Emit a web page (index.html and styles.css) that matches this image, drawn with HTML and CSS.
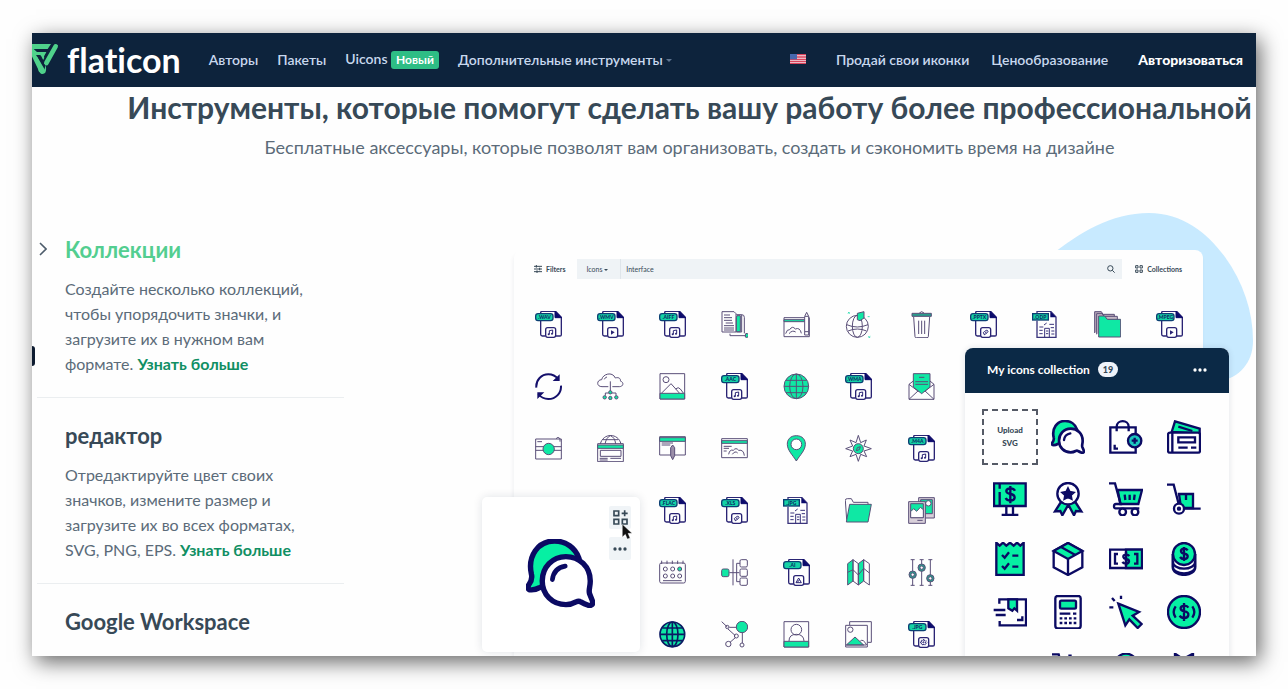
FILE: index.html
```html
<!DOCTYPE html>
<html lang="ru">
<head>
    <meta charset="UTF-8">
    <meta name="viewport" content="width=device-width, initial-scale=1.0">
    <title>Flaticon: инструменты</title>
    <link rel="stylesheet" href="styles.css">
</head>
<body>
    <!-- shared icon shapes -->
    <svg class="sprite" aria-hidden="true">
        <symbol id="file" viewBox="0 0 81 81">
            <path d="M17 7V5q0-4 4-4h41l17 18v52q0 4-4 4H62M31 75h-9q-5 0-5-5V29" fill="none" stroke="#2a2474" stroke-width="4"/>
            <path d="M60 1v19h19z" fill="#0b0a6b" stroke="#0b0a6b" stroke-width="3"/>
            <rect x="2" y="8" width="52" height="21" rx="7" fill="#14d3a6" stroke="#0b3f73" stroke-width="4"/>
            <rect x="32" y="50" width="30" height="29" rx="6" fill="#fff" stroke="#2a2474" stroke-width="4"/>
        </symbol>
        <symbol id="note" viewBox="0 0 81 81">
            <path d="M43 70V59l10-2v11" fill="none" stroke="#2a2474" stroke-width="3"/>
            <circle cx="41" cy="70" r="3" fill="#2a2474"/><circle cx="51" cy="68" r="3" fill="#2a2474"/>
        </symbol>
        <symbol id="play" viewBox="0 0 81 81">
            <path d="M42 58l11 6-11 7z" fill="#2a2474"/>
        </symbol>
        <symbol id="clip" viewBox="0 0 81 81">
            <path d="M41 68q-3-4 2-6l6-4q4-1 5 3 0 3-4 5l-5 5q-3 1-4-3zM44 67l6-4" fill="none" stroke="#2a2474" stroke-width="3"/>
        </symbol>
        <symbol id="doc" viewBox="0 0 81 81">
            <path d="M15 29v50h57V18L56 1H15v6" fill="none" stroke="#3a347c" stroke-width="4"/>
            <path d="M55 1v18h17z" fill="#0b0a6b"/>
            <rect x="2" y="8" width="47" height="19" fill="#14d3a6" stroke="#0b3f73" stroke-width="4"/>
            <path d="M22 48h12M22 58h10M22 68h10M36 42l8-6M52 40h14M38 79V52h14v27M42 60h7M42 68h7M56 50h10M58 60h9M58 69h9" fill="none" stroke="#3a347c" stroke-width="3"/>
        </symbol>
        <symbol id="chat" viewBox="0 0 102 102">
            <path d="M5 75q-4-2-1-7 6-8 4-16C2 25 18 3 42 3c17 0 31 10 36 25L34 70q-8-2-14 2-7 4-15 3z" fill="#06f0a3" stroke="#0b0a63" stroke-width="8"/>
            <path d="M59 26c20 0 36 15 36 36 0 10-3 13-1 19l4 10c2 6-1 8-6 7q-6-2-11-5-3-2-7 0-7 4-15 4c-20 0-35-15-35-35s15-36 35-36z" fill="#fff" stroke="#0b0a63" stroke-width="8"/>
            <path d="M39 60q2-17 19-20" fill="none" stroke="#0b0a63" stroke-width="7" stroke-linecap="round"/>
        </symbol>
    </svg>

    <div class="window">
        <header class="header">
            <a class="logo" href="#">
                <svg class="logo-mark" viewBox="0 0 96 96" aria-hidden="true">
                    <path d="M6 3h66L62 18H32l5 9h20l-6 12 6 34q2 20-10 20-7 0-10-7L2 14Q-2 5 6 3z" fill="#4fd28b"/>
                    <path d="M20 18h43l-6 9H30zM27 36h14l12 24 7-12-8 34z" fill="#0d233c"/>
                    <path d="M28 37l26 44-9 12-10-8z" fill="#4fd28b"/>
                    <path d="M36 27h22l-7 12h-9z" fill="#4fd28b"/>
                    <path d="M84 11L54 63" stroke="#0d233c" stroke-width="22"/>
                    <path d="M86 10L58 60" stroke="#4fd28b" stroke-width="14" stroke-linecap="round"/>
                </svg>
                <span>flaticon</span>
            </a>
            <nav class="menu">
                <a href="#">Авторы</a>
                <a href="#">Пакеты</a>
                <a href="#">Uicons <span class="badge">Новый</span></a>
                <a href="#">Дополнительные инструменты <span class="caret"></span></a>
            </nav>
            <nav class="menu menu-right">
                <button class="lang" aria-label="English">
                    <svg viewBox="0 0 48 30" width="16" height="10">
                        <rect width="48" height="30" fill="#f3dfe6"/>
                        <path d="M0 2h48M0 9h48M0 16h48M0 22h48M0 28h48" stroke="#d8445c" stroke-width="4"/>
                        <rect width="21" height="16" fill="#4968ae"/>
                    </svg>
                </button>
                <a href="#">Продай свои иконки</a>
                <a href="#">Ценообразование</a>
                <a class="login" href="#">Авторизоваться</a>
            </nav>
        </header>

        <section class="hero">
            <h1>Инструменты, которые помогут сделать вашу работу более профессиональной</h1>
            <p>Бесплатные аксессуары, которые позволят вам организовать, создать и сэкономить время на дизайне</p>
        </section>

        <main class="tools">
            <div class="tool-list">
                <span class="side-tab"></span>
                <article class="tool active">
                    <svg class="chevron" viewBox="0 0 8 14" width="8" height="14"><path d="M1 1l6 6-6 6" fill="none" stroke="#4d5c6b" stroke-width="1.6"/></svg>
                    <h2>Коллекции</h2>
                    <p>Создайте несколько коллекций, чтобы упорядочить значки, и загрузите их в нужном вам формате. <a href="#">Узнать больше</a></p>
                </article>
                <article class="tool">
                    <h2>редактор</h2>
                    <p>Отредактируйте цвет своих значков, измените размер и загрузите их во всех форматах, SVG, PNG, EPS. <a href="#">Узнать больше</a></p>
                </article>
                <article class="tool">
                    <h2>Google Workspace</h2>
                </article>
            </div>

            <div class="showcase">
                <svg class="blob" viewBox="0 0 202 176" aria-hidden="true">
                    <path d="M0 42C28 20 60 0 98 0c34 0 58 20 76 44 18 25 28 54 28 84 0 22-14 36-32 40L60 176z" fill="#c8eaff"/>
                </svg>

                <div class="panel">
                    <div class="toolbar">
                        <button class="tool-btn">
                            <svg viewBox="0 0 24 24" width="8" height="8"><path d="M0 4h24M0 12h24M0 20h24M7 0v8M17 8v8M9 16v8" fill="none" stroke="#374957" stroke-width="3"/></svg>
                            Filters
                        </button>
                        <div class="search">
                            <button class="search-type">Icons <span class="caret"></span></button>
                            <input type="text" value="Interface" aria-label="Search">
                            <svg viewBox="0 0 24 24" width="8" height="8"><circle cx="10" cy="10" r="8" fill="none" stroke="#374957" stroke-width="3"/><path d="M16 16l7 7" stroke="#374957" stroke-width="3"/></svg>
                        </div>
                        <button class="tool-btn">
                            <svg viewBox="0 0 24 24" width="8" height="8"><path d="M2 2h7v7H2zM15 2h7v7h-7zM2 15h7v7H2zM15 15h7v7h-7z" fill="none" stroke="#374957" stroke-width="3"/></svg>
                            Collections
                        </button>
                    </div>

                    <div class="icon-grid">
                        <!-- row 1 -->
                        <svg viewBox="0 0 81 81"><use href="#file"/><use href="#note"/><text x="28" y="24">.WAV</text></svg>
                        <svg viewBox="0 0 81 81"><use href="#file"/><use href="#play"/><text x="28" y="24">.WMV</text></svg>
                        <svg viewBox="0 0 81 81"><use href="#file"/><use href="#note"/><text x="28" y="24">.AIFF</text></svg>
                        <svg viewBox="0 0 81 81" class="line">
                            <path d="M46 11h16v52H46"/><path d="M48 14h10v48H46V20z" class="fill"/>
                            <path d="M3 2h36l6 6v55H3zM9 12h18M9 20h24M9 28h24M14 36h22M9 44h30M9 51h30M9 57h30M27 68v6h46"/><path d="M74 68a6 6 0 1 1-1 10z" class="fill"/><path d="M62 11q8 0 8 8v48"/>
                        </svg>
                        <svg viewBox="0 0 81 81" class="line">
                            <path d="M3 20h76v57H3zM8 68q4-14 12-12 8-13 17-2 14-6 18 13M18 68q10-12 20-5"/><path d="M3 26h62v6H3z" class="fill"/>
                            <path d="M65 72V16l6-12 6 12v56z" fill="#fff"/><path d="M66 16h11M66 62h11"/>
                        </svg>
                        <svg viewBox="0 0 81 81" class="line">
                            <circle cx="37" cy="46" r="33"/><ellipse cx="37" cy="46" rx="15" ry="33"/><path d="M5 41q32 14 64 0M9 60q28-12 56 0"/>
                            <path d="M37 26V7L57 2v19l-12 8z" class="fill"/><path d="M9 3l5 5M14 3l-5 5M70 76l6 5M76 76l-6 5M68 17h6" class="spark"/>
                        </svg>
                        <svg viewBox="0 0 81 81" class="line">
                            <path d="M17 18l4 59q0 3 4 3h32q4 0 4-3l4-59M32 29v40M41 29v40M50 29v40M34 6q7-8 14 0"/><path d="M12 7h58v9H12z" class="fill dark"/>
                        </svg>
                        <svg viewBox="0 0 81 81"><use href="#file"/><use href="#clip"/><text x="28" y="24">.PPTX</text></svg>
                        <svg viewBox="0 0 81 81"><use href="#doc"/><text x="25" y="23">.ODP</text></svg>
                        <svg viewBox="0 0 81 81" class="line">
                            <path d="M2 66V2h20l5 8h34v14" fill="#b9a9b9"/><path d="M8 70V8h16l6 8h40v14" fill="#c4b8c4"/>
                            <path d="M14 78V15h18l8 10h40v53z" class="fill"/>
                        </svg>
                        <svg viewBox="0 0 81 81"><use href="#file"/><use href="#play"/><text x="28" y="24">.MPEG</text></svg>

                        <!-- row 2 -->
                        <svg viewBox="0 0 81 81" class="row-start">
                            <path d="M4 44C2 20 20 4 40 4c12 0 22 5 30 15M78 38c1 22-15 40-38 40-12 0-22-5-30-15" fill="none" stroke="#140f6b" stroke-width="6"/>
                            <path d="M74 4v20H53zM7 78V58h21z" fill="#140f6b"/>
                        </svg>
                        <svg viewBox="0 0 81 81" class="line">
                            <path d="M15 41C-3 41-1 20 14 20 17 3 46-6 55 15c12-4 17 4 15 9 12 4 9 17-3 17H46M34 41H15M22 19q3-7 8-7M40 25v32M40 60H25v8M40 60h17v8"/>
                            <g class="fill"><circle cx="40" cy="58" r="5"/><circle cx="23" cy="73" r="5"/><circle cx="40" cy="75" r="5"/><circle cx="58" cy="73" r="5"/></g>
                        </svg>
                        <svg viewBox="0 0 81 81" class="line">
                            <path d="M3 2h74v76H3z"/><circle cx="21" cy="20" r="9"/><path d="M8 60l28-28 25 28M50 48q8-8 14 0l9 12"/><path d="M3 61h74v17H3z" class="fill"/>
                        </svg>
                        <svg viewBox="0 0 81 81"><use href="#file"/><use href="#note"/><text x="28" y="24">.AAC</text></svg>
                        <svg viewBox="0 0 81 81" class="line">
                            <circle cx="40" cy="40" r="37" class="fill"/><ellipse cx="40" cy="40" rx="20" ry="37"/><path d="M40 3v74M3 40h74M9 22h62M9 59h62"/>
                        </svg>
                        <svg viewBox="0 0 81 81"><use href="#file"/><use href="#note"/><text x="28" y="24">.WMA</text></svg>
                        <svg viewBox="0 0 81 81" class="line">
                            <path d="M3 34l13-10h50l12 10v45H3zM3 34l29 22M78 34L49 56M3 79l29-27M78 79L49 52"/><path d="M16 2h50v40L41 62 16 42z" class="fill"/><path d="M33 13h16M22 26h38M22 34h38"/>
                        </svg>

                        <!-- row 3 -->
                        <svg viewBox="0 0 81 81" class="line row-start">
                            <path d="M2 12h77v60H2zM2 35h77M2 46h77M7 20h14M63 11q6-8 12 0v9"/><circle cx="41" cy="42" r="17" class="fill"/>
                        </svg>
                        <svg viewBox="0 0 81 81" class="line">
                            <path d="M10 27C18-7 64-7 72 27M24 27q4-20 16-25 14 5 16 25M18 14h46M2 26h77v54H2zM10 46h62v18H10zM8 70h24M8 75h24M40 70h32"/><path d="M2 30h77v10H2z" class="fill"/>
                        </svg>
                        <svg viewBox="0 0 81 81" class="line">
                            <path d="M2 5h77v55H2zM8 24h34M8 30h26"/><path d="M2 8h77v11H2z" class="fill"/><path d="M35 62V38l6-8 6 8v24l-6 12z" fill="#9a8ea8"/>
                        </svg>
                        <svg viewBox="0 0 81 81" class="line">
                            <path d="M2 11h77v57H2zM8 34h24M8 40h16M8 48h9M23 58q3-16 14-12 8-10 16 0 15-3 17 16M34 58q8-12 16-4"/><path d="M2 17h77v8H2z" class="fill"/>
                        </svg>
                        <svg viewBox="0 0 81 81" class="line">
                            <path d="M40 2c19 0 28 13 27 27-1 18-16 31-27 49C29 60 14 47 13 29 12 15 21 2 40 2z" class="fill"/><circle cx="40" cy="28" r="16" fill="#fff"/>
                        </svg>
                        <svg viewBox="0 0 81 81" class="line">
                            <path d="M40 1l7 22 17-8-7 18 22 8-22 7 8 17-18-7-7 21-7-21-18 7 8-17L2 41l21-8-8-18 18 8z"/><circle cx="40" cy="41" r="15" class="fill"/><path d="M34 47l3-9 9-3-3 9z"/>
                        </svg>
                        <svg viewBox="0 0 81 81"><use href="#file"/><use href="#note"/><text x="28" y="24">.M4A</text></svg>

                        <!-- row 4 -->
                        <svg viewBox="0 0 81 81" class="row-start-third"><use href="#file"/><use href="#note"/><text x="28" y="24">.FLAC</text></svg>
                        <svg viewBox="0 0 81 81"><use href="#file"/><use href="#clip"/><text x="28" y="24">.XLS</text></svg>
                        <svg viewBox="0 0 81 81"><use href="#doc"/><text x="25" y="23">.JPG</text></svg>
                        <svg viewBox="0 0 81 81" class="line">
                            <path d="M5 68L1 10q0-5 6-5h12l6 11h44v8"/><path d="M14 22h65L69 75H4z" class="fill"/>
                        </svg>
                        <svg viewBox="0 0 81 81" class="line">
                            <path d="M32 2h47v61H32z" fill="#d9d0da"/><path d="M38 8h35v42H38z" class="fill"/><circle cx="61" cy="19" r="8" fill="#fff"/>
                            <path d="M2 14h50v65H2z" fill="#d9d0da"/><path d="M8 20h38v42H8z" class="fill"/><path d="M8 44l9-9 9 8 11-12 9 7v24H8z" fill="#fff"/><path d="M28 70h16"/>
                        </svg>

                        <!-- row 5 -->
                        <svg viewBox="0 0 81 81" class="line row-start-third">
                            <rect x="2" y="12" width="77" height="60" rx="5"/><path d="M8 5v10M24 5v10M40 5v10M56 5v10M72 5v10M12 65h56"/>
                            <circle cx="19" cy="30" r="6"/><circle cx="41" cy="30" r="6"/><circle cx="62" cy="30" r="6" class="fill"/><circle cx="19" cy="51" r="6"/><circle cx="41" cy="51" r="6"/><circle cx="62" cy="51" r="6"/>
                        </svg>
                        <svg viewBox="0 0 81 81" class="line">
                            <path d="M36 1v78M25 41h30M57 13H47v55h10"/><rect x="57" y="2" width="22" height="22" rx="4"/><rect x="57" y="30" width="22" height="22" rx="4"/><rect x="57" y="57" width="22" height="22" rx="4"/>
                            <rect x="2" y="30" width="22" height="23" rx="5" class="fill"/>
                        </svg>
                        <svg viewBox="0 0 81 81"><use href="#file"/><path d="M39 71l8-14 8 14zM43 70l6-7" fill="none" stroke="#2a2474" stroke-width="3"/><text x="28" y="24">.AI</text></svg>
                        <svg viewBox="0 0 81 81" class="line">
                            <path d="M8 14L24 2v64L8 78zM40 14L56 2v64L40 78z" class="fill"/><path d="M24 2l16 12v64L24 66zM56 2l17 12v64L56 66zM8 40l16-8 16 16 16-20 17 14"/>
                        </svg>
                        <svg viewBox="0 0 81 81" class="line">
                            <path d="M14 2v77M8 2h12M8 79h12M41 2v77M35 2h12M35 79h12M67 2v77M61 2h12M61 79h12"/>
                            <g class="fill dark"><circle cx="14" cy="47" r="11"/><circle cx="41" cy="26" r="11"/><circle cx="67" cy="58" r="11"/></g>
                            <g fill="#fff"><circle cx="14" cy="47" r="5"/><circle cx="41" cy="26" r="5"/><circle cx="67" cy="58" r="5"/></g>
                        </svg>

                        <!-- row 6 -->
                        <svg viewBox="0 0 81 81" class="bold-line row-start-third">
                            <circle cx="40" cy="40" r="37" class="fill"/><ellipse cx="40" cy="40" rx="17" ry="37"/><path d="M40 3v74M3 40h74M10 21h60M10 59h60"/>
                        </svg>
                        <svg viewBox="0 0 81 81" class="line">
                            <path d="M2 2l17 16M25 19h22M21 24l22 20M43 50L27 64M64 36v30"/><circle cx="19" cy="18" r="5"/><circle cx="46" cy="45" r="6"/><circle cx="22" cy="69" r="8"/><circle cx="63" cy="72" r="6"/>
                            <circle cx="63" cy="18" r="17" class="fill"/>
                        </svg>
                        <svg viewBox="0 0 81 81" class="line">
                            <path d="M3 2h74v76H3zM18 60q0-20 22-20t23 20"/><circle cx="40" cy="26" r="16"/><path d="M3 61h74v17H3z" class="fill"/>
                        </svg>
                        <svg viewBox="0 0 81 81" class="line">
                            <path d="M14 12V2h65v62H68M2 13h65v65H2z"/><circle cx="16" cy="26" r="8"/><path d="M4 72l26-24 26 24z" class="fill"/><path d="M46 60q8-8 19 12M4 72h60"/>
                        </svg>
                        <svg viewBox="0 0 81 81"><use href="#file"/><path d="M40 58h14v13H40zM47 54v21M36 64h22" fill="none" stroke="#2a2474" stroke-width="3" stroke-dasharray="4 3"/><text x="28" y="24">.JPG</text></svg>
                    </div>
                </div>

                <div class="preview">
                    <svg class="preview-icon" viewBox="0 0 102 102"><use href="#chat"/></svg>
                    <div class="preview-actions">
                        <button aria-label="Add to collection">
                            <svg viewBox="0 0 45 45" width="15" height="15"><path d="M3 3h14v14H3zM3 28h14v14H3zM28 28h14v14H28zM26 10h18M35 1v18" fill="none" stroke="#374957" stroke-width="5"/></svg>
                        </button>
                        <button aria-label="More">
                            <svg viewBox="0 0 42 12" width="14" height="4" fill="#374957"><circle cx="6" cy="6" r="5"/><circle cx="21" cy="6" r="5"/><circle cx="36" cy="6" r="5"/></svg>
                        </button>
                    </div>
                    <svg class="cursor" viewBox="0 0 30 48" width="10" height="16"><path d="M1 1v38l9-8 6 14 8-3-6-14h12z" fill="#111" stroke="#fff"/></svg>
                </div>

                <div class="collection">
                    <div class="collection-head">
                        <h3>My icons collection</h3>
                        <span class="count">19</span>
                        <button class="more" aria-label="More">
                            <svg viewBox="0 0 42 12" width="14" height="4"><circle cx="6" cy="6" r="5"/><circle cx="21" cy="6" r="5"/><circle cx="36" cy="6" r="5"/></svg>
                        </button>
                    </div>
                    <div class="collection-grid">
                        <button class="upload">Upload SVG</button>
                        <svg viewBox="0 0 102 102"><use href="#chat"/></svg>
                        <svg viewBox="0 0 102 102">
                            <path d="M4 22h76v76H4z" fill="#fff"/><path d="M23 34V20C23-2 59-2 59 20v14M17 74v12h10"/><circle cx="77" cy="62" r="20" class="fill teal"/><path d="M77 53v18M68 62h18"/>
                        </svg>
                        <svg viewBox="0 0 102 102">
                            <path d="M14 36L24 4l74 22v14z" class="fill"/><path d="M34 20l42 13"/><rect x="3" y="38" width="96" height="60" rx="6" fill="#fff"/><path d="M16 38v60M34 52h50v15H34zM34 83h28M72 83h16"/>
                        </svg>

                        <svg viewBox="0 0 102 102">
                            <path d="M3 4h95v68H3z" class="fill"/><path d="M20 6v14M20 30v40M40 72v28M60 72v28M26 99h50"/><path d="M66 26q-4-8-16-7-11 2-10 9 1 6 12 8 13 2 13 11-1 9-13 9-10 0-14-8M52 12v52"/>
                        </svg>
                        <svg viewBox="0 0 102 102">
                            <path d="M30 60L12 88l16-1 6 13 18-32 17 32 6-13 16 1-18-28z" class="fill"/><circle cx="51" cy="35" r="32" fill="#fff"/><path d="M51 20l5 10 11 2-8 7 2 11-10-5-10 5 2-11-8-7 11-2z" fill="#0b0a63"/>
                        </svg>
                        <svg viewBox="0 0 102 102">
                            <path d="M26 24h73L88 66H34z" class="fill"/><path d="M0 4h18l17 62h-14q-6 0-6 7t6 6h70M47 38l2 16M62 38v16M77 38l-2 16"/><circle cx="41" cy="90" r="10" fill="#fff"/><circle cx="78" cy="90" r="10" fill="#fff"/>
                        </svg>
                        <svg viewBox="0 0 102 102">
                            <path d="M36 36h42v42H42z" class="fill"/><path d="M0 8h20l16 62M48 80h53M57 36v18"/><circle cx="36" cy="80" r="15" fill="#fff"/><circle cx="36" cy="80" r="3"/>
                        </svg>

                        <svg viewBox="0 0 102 102">
                            <path d="M10 2l10 9 10-9 10 9 11-9 11 9 10-9 10 9 10-9v97H10z" class="fill"/><path d="M27 39l8 8 13-16M58 41h18M27 72l8 8 13-16M58 74h18"/>
                        </svg>
                        <svg viewBox="0 0 102 102">
                            <path d="M51 3l43 24v49L51 99 8 76V27z" fill="#fff"/><path d="M51 3l43 24-43 24L8 27z" class="fill"/><path d="M51 51v48M30 15l43 24"/>
                        </svg>
                        <svg viewBox="0 0 102 102">
                            <path d="M3 23h96v55H3z" fill="#fff"/><path d="M51 23h48v55H51z" class="fill"/><path d="M27 36h-9v29h9M75 36h10v29H75M61 42q-4-5-11-4-8 1-7 7 1 5 8 6 9 1 9 7-1 7-9 7-7 0-11-5M51 30v42"/>
                        </svg>
                        <svg viewBox="0 0 102 102">
                            <path d="M17 36v38c0 33 68 33 68 0V36M17 56c0 32 68 32 68 0M17 72c0 30 68 30 68 0" fill="#fff"/><circle cx="51" cy="36" r="33" class="fill"/><path d="M62 25q-4-6-12-5-9 2-8 8 1 6 10 7 11 2 10 9-1 7-10 7-9 0-13-6M51 15v42"/>
                        </svg>

                        <svg viewBox="0 0 102 102">
                            <path d="M19 26V13h80v78H20V78M2 45h35M8 60h30M88 64v11H72"/><path d="M46 13h26v34l-8-7-6 7-12-7z" class="fill"/>
                        </svg>
                        <svg viewBox="0 0 102 102">
                            <rect x="13" y="3" width="76" height="97" rx="7" fill="#fff"/><rect x="27" y="17" width="48" height="24" rx="4" class="fill"/><path d="M26 56h32M66 56h10M26 70h8M40 70h8M54 70h8M68 70h8M26 84h8M40 84h8M54 84h8M68 84h8"/>
                        </svg>
                        <svg viewBox="0 0 102 102">
                            <path d="M28 26l62 25-19 11 27 25-12 12-25-26-12 18z" class="fill"/><path d="M9 9l8 9M36 2v10M1 37h12"/>
                        </svg>
                        <svg viewBox="0 0 102 102">
                            <circle cx="51" cy="51" r="48" class="fill"/><path d="M26 34q-12 17 0 34M76 34q12 17 0 34M64 38q-4-7-13-6-11 1-10 9 1 7 11 8 13 2 12 11-1 9-13 9-9 0-13-7M51 24v54"/>
                        </svg>

                        <svg viewBox="0 0 102 102" class="col-2"><path d="M3 4h20l12 50h60M52 8h10"/></svg>
                        <svg viewBox="0 0 102 102"><circle cx="51" cy="36" r="34" class="fill"/></svg>
                        <svg viewBox="0 0 102 102"><path d="M24 2l24 16L78 2v60H24z" class="fill"/></svg>
                    </div>
                </div>
            </div>
        </main>
    </div>
</body>
</html>
```
FILE: styles.css
```css
* {
    box-sizing: border-box;
}

body {
    margin: 0;
    padding: 33px 32px;
    height: 100vh;
    background: #fefefe;
    font-family: Lato, "Noto Sans", sans-serif;
    font-size: 16px;
    color: #374957;
}

a {
    color: inherit;
    text-decoration: none;
}

button {
    padding: 0;
    border: none;
    background: none;
    font-family: inherit;
    color: inherit;
    cursor: pointer;
}

h1, h2, h3, p {
    margin: 0;
}

.sprite {
    display: none;
}

.window {
    height: 100%;
    overflow: hidden;
    background: #fefefe;
    box-shadow: 4px 6px 20px rgba(0, 0, 0, 0.6);
}

/* header */
.header {
    display: flex;
    align-items: center;
    height: 54px;
    padding: 0 13px 2px 0;
    background: #0d233c;
    color: #c8d8ee;
    font-size: 14px;
    font-weight: 600;
    white-space: nowrap;
}

.logo {
    display: flex;
    align-items: center;
    gap: 8px;
    margin-left: -5px;
    color: #fff;
    font-size: 34px;
    font-weight: 700;
    font-variant-ligatures: none;
}

.logo-mark {
    width: 32px;
    height: 32px;
}

.menu {
    display: flex;
    align-items: center;
    gap: 19px;
    margin-left: 28px;
}

.menu-right {
    gap: 22px;
    margin-left: auto;
}

.badge {
    display: inline-block;
    padding: 0 5px;
    border-radius: 3px;
    background: #2ebd85;
    color: #fff;
    font-size: 12px;
    font-weight: 700;
    line-height: 18px;
}

.caret {
    display: inline-block;
    border: 3px solid transparent;
    border-top-color: #5f7590;
    border-bottom: none;
    vertical-align: middle;
}

.lang {
    display: flex;
    margin-right: 8px;
}

.login {
    margin-left: 8px;
    color: #fff;
    font-weight: 900;
}

/* title */
.hero {
    padding: 2px 0 0 91px;
    text-align: center;
    white-space: nowrap;
}

.hero h1 {
    font-size: 30px;
    line-height: 36px;
}

.hero p {
    margin-top: 9px;
    color: #5b6b79;
    font-size: 18px;
    line-height: 26px;
}

.tools {
    display: flex;
    margin-top: 52px;
}

/* list of tools */
.tool-list {
    position: relative;
    width: 312px;
    padding-left: 5px;
}

.side-tab {
    position: absolute;
    top: 134px;
    left: 0;
    width: 3px;
    height: 20px;
    border-radius: 0 3px 3px 0;
    background: #0d1b30;
}

.tool {
    position: relative;
    padding: 24px 28px 21px;
    border-bottom: 1px solid #ebeef0;
}

.tool h2 {
    font-size: 22px;
    line-height: 28px;
}

.tool p {
    margin-top: 12px;
    color: #5b6b79;
    line-height: 25px;
}

.tool p a {
    color: #108f63;
    font-weight: 700;
}

.tool.active h2 {
    color: #53ce90;
}

.chevron {
    position: absolute;
    top: 30px;
    left: 2px;
}

/* app picture */
.showcase {
    position: relative;
    flex: 1;
    margin-left: 138px;
    padding: 38px 53px 0 32px;
}

.blob {
    position: absolute;
    top: 1px;
    right: 3px;
    width: 202px;
}

.panel {
    position: relative;
    height: 420px;
    border-radius: 8px;
    background: #fefefe;
    box-shadow: -1px 4px 4px rgba(13, 35, 60, 0.06);
}

.toolbar {
    display: flex;
    align-items: center;
    padding: 9px 21px 0 20px;
}

.tool-btn {
    display: flex;
    align-items: center;
    gap: 4px;
    font-size: 7px;
    font-weight: 700;
}

.search {
    display: flex;
    flex: 1;
    align-items: center;
    height: 20px;
    margin: 0 13px 0 12px;
    padding: 0 7px 0 9px;
    background: #eff3f6;
}

.search-type {
    padding-right: 12px;
    border-right: 1px solid #dfe5ea;
    font-size: 7px;
    line-height: 20px;
}

.search-type .caret {
    border-width: 2px;
    border-bottom: none;
    border-top-color: #374957;
}

.search input {
    flex: 1;
    padding: 0 5px;
    border: none;
    background: none;
    color: #374957;
    font-family: inherit;
    font-size: 7px;
}

.icon-grid {
    display: grid;
    grid-template-columns: repeat(11, 1fr);
    grid-auto-rows: 62px;
    place-items: center;
    margin: 14px 2px 0 3px;
}

.icon-grid svg {
    width: 27px;
    height: 27px;
}

.icon-grid .row-start {
    grid-column-start: 1;
}

.icon-grid .row-start-third {
    grid-column-start: 3;
}

.icon-grid text {
    fill: #0b2f66;
    font-size: 15px;
    font-weight: 900;
    text-anchor: middle;
}

.line {
    fill: none;
    stroke: #5a4f78;
    stroke-width: 3;
}

.line .fill,
.bold-line .fill {
    fill: #0fe8a4;
}

.line .dark {
    fill: #2a9c8c;
}

.line .spark {
    stroke: #3fe0b8;
}

.bold-line {
    fill: none;
    stroke: #0b1a63;
    stroke-width: 5;
}

/* enlarged icon */
.preview {
    position: absolute;
    top: 285px;
    left: 0;
    width: 158px;
    height: 155px;
    border-radius: 5px;
    background: #fff;
    box-shadow: 0 0 10px rgba(13, 35, 60, 0.12);
}

.preview-icon {
    width: 69px;
    height: 69px;
    margin: 42px 0 0 44px;
}

.preview-actions {
    position: absolute;
    top: 9px;
    right: 9px;
    display: grid;
    gap: 8px;
}

.preview-actions button {
    display: flex;
    align-items: center;
    justify-content: center;
    width: 22px;
    height: 23px;
    border-radius: 2px;
    background: #f0f4f7;
}

.cursor {
    position: absolute;
    top: 27px;
    right: 8px;
}

/* collection window */
.collection {
    position: absolute;
    top: 136px;
    right: 27px;
    width: 264px;
    border-radius: 8px;
    background: #fefefe;
    box-shadow: 0 0 6px rgba(13, 35, 60, 0.12);
}

.collection-head {
    display: flex;
    align-items: center;
    gap: 8px;
    height: 45px;
    padding: 0 22px 2px;
    border-radius: 8px 8px 0 0;
    background: #0b2946;
    color: #fff;
}

.collection-head h3 {
    font-size: 12px;
}

.count {
    padding: 0 5px;
    border-radius: 8px;
    background: #eff3fa;
    color: #374957;
    font-size: 9px;
    font-weight: 900;
    line-height: 15px;
}

.more {
    display: flex;
    margin-left: auto;
    fill: #fff;
}

.collection-grid {
    display: grid;
    grid-template-columns: repeat(4, 1fr);
    grid-template-rows: 56px 56px 52px 42px 62px;
    gap: 6px 0;
    place-items: center;
    padding: 16px;
}

.collection-grid svg {
    width: 34px;
    height: 34px;
    fill: none;
    stroke: #0b0a63;
    stroke-width: 7;
}

.collection-grid .fill {
    fill: #06f0a3;
}

.collection-grid .teal {
    fill: #1cc9c0;
}

.collection-grid .col-2 {
    grid-column-start: 2;
}

.upload {
    width: 56px;
    height: 56px;
    padding: 0 8px;
    border: 2px dashed #555a66;
    font-size: 8px;
    font-weight: 900;
    line-height: 13px;
}
```
